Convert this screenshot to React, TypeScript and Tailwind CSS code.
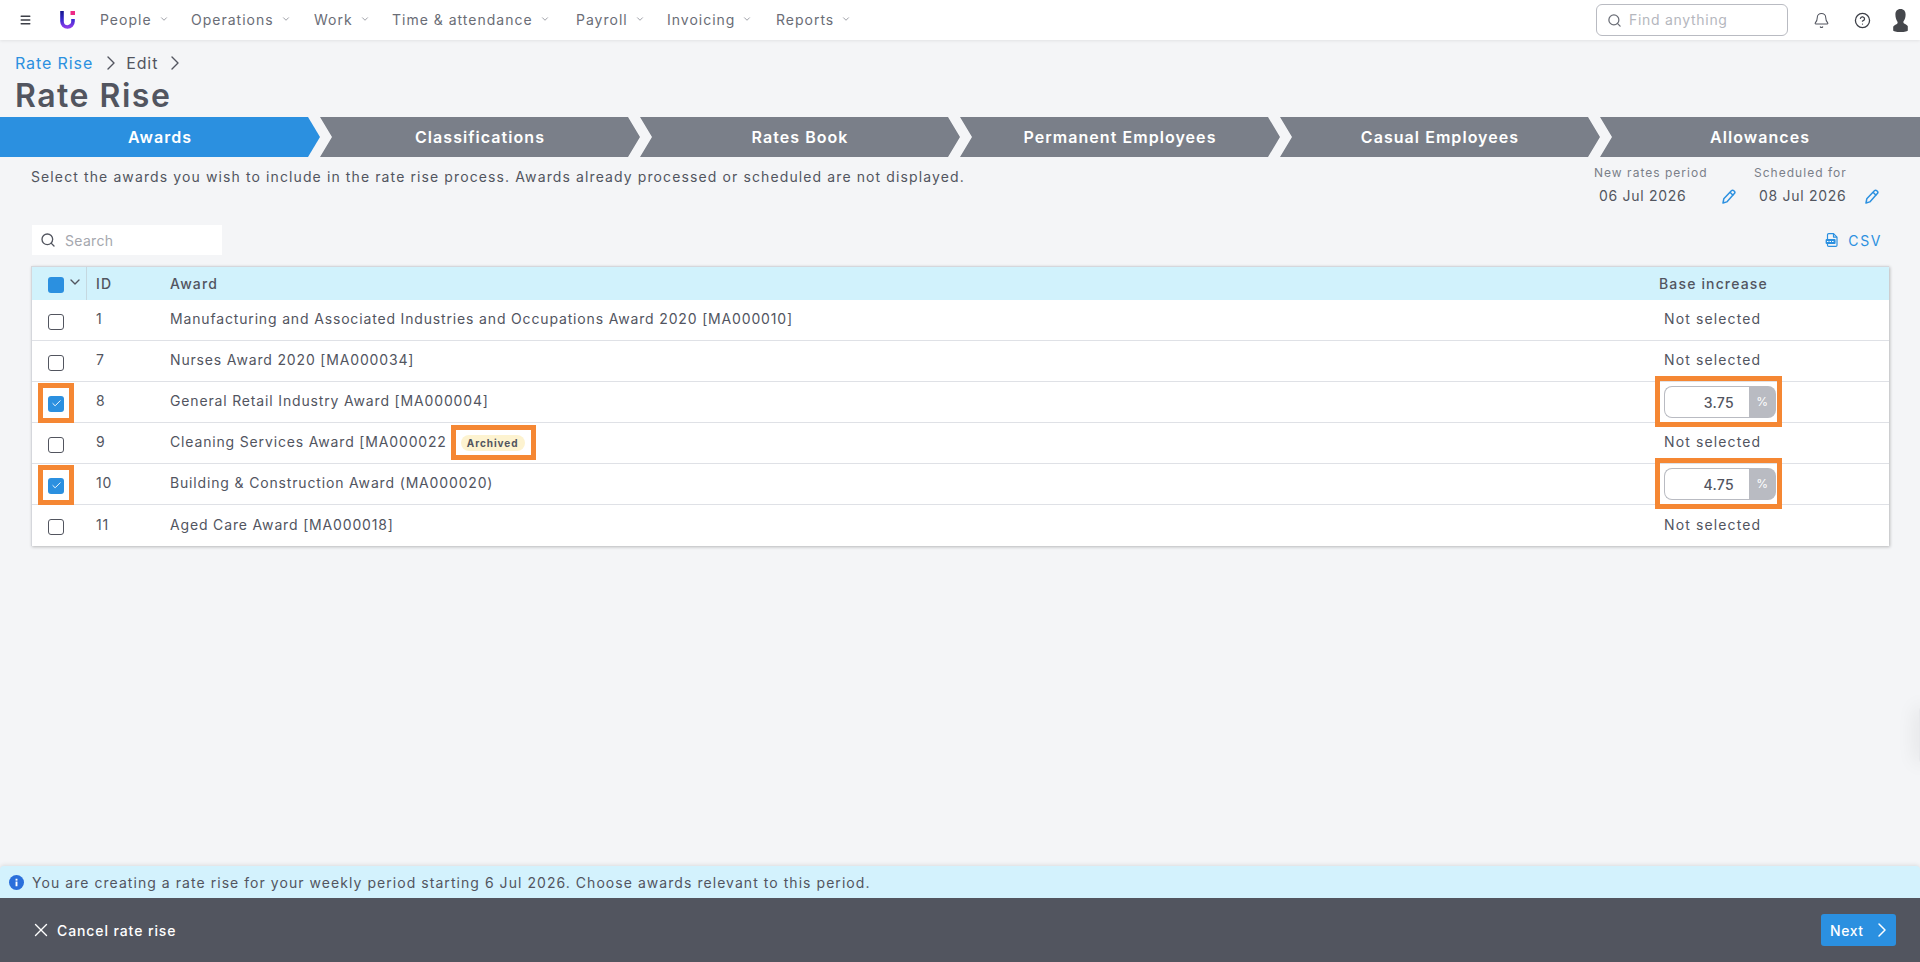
import React from "react";
import { Search, ChevronDown, ChevronRight, Menu, Bell, CircleHelp, X, Check } from "lucide-react";

const font = { fontFamily: "Inter, 'Liberation Sans', sans-serif" };

const navItems = [
  ["People", "w-[91px]"],
  ["Operations", "w-[123px]"],
  ["Work", "w-[78px]"],
  ["Time & attendance", "w-[184px]"],
  ["Payroll", "w-[91px]"],
  ["Invoicing", "w-[109px]"],
  ["Reports", "w-[90px]"],
];

const steps = ["Awards", "Classifications", "Rates Book", "Permanent Employees", "Casual Employees", "Allowances"];

const rows = [
  { id: "1", name: "Manufacturing and Associated Industries and Occupations Award 2020 [MA000010]" },
  { id: "7", name: "Nurses Award 2020 [MA000034]" },
  { id: "8", name: "General Retail Industry Award [MA000004]", value: "3.75" },
  { id: "9", name: "Cleaning Services Award [MA000022", archived: true },
  { id: "10", name: "Building & Construction Award (MA000020)", value: "4.75" },
  { id: "11", name: "Aged Care Award [MA000018]" },
];

function Logo() {
  return (
    <svg width="15" height="18" viewBox="0 0 15 18" className="shrink-0">
      <defs>
        <linearGradient id="lg" x1="0" y1="0" x2="0" y2="1">
          <stop offset="0" stopColor="#14148c" />
          <stop offset="0.55" stopColor="#3a2bd0" />
          <stop offset="1" stopColor="#8a3be8" />
        </linearGradient>
      </defs>
      <path d="M2 0v10.500a5.500 5.500 0 0 0 11 0V8" fill="none" stroke="url(#lg)" strokeWidth="3.600" />
      <rect x="10.500" y="0" width="4.500" height="4" fill="#ee2a86" />
    </svg>
  );
}

function UserIcon() {
  return (
    <svg width="15" height="23" viewBox="0 0 15 23" fill="#45474c">
      <path d="M7.500 0C11 0 12.600 2.400 12.600 5.600c0 2.600-.7 5-1.900 6.500-.5.700-.5 1.800.3 2.300 1.500.9 3.400 1.400 3.800 2.800V21.500c0 .8-3 1.500-7.300 1.500S.2 22.300.2 21.500v-3.800c.4-1.400 2.300-1.900 3.800-2.800.8-.5.800-1.600.3-2.300C3.100 10.600 2.400 8.200 2.400 5.600 2.400 2.400 4 0 7.500 0z" />
    </svg>
  );
}

function PencilIcon() {
  return (
    <svg width="14" height="15" viewBox="0 0 14 15" fill="none" stroke="#2b90e0" strokeWidth="1.500" strokeLinejoin="round">
      <path d="M1 14l.8-4.200L9.400 1.700c.7-.7 1.700-.7 2.400 0l.5.500c.7.700.7 1.700 0 2.400L4.800 12.900 1 14z" />
      <path d="M8 3.200l3.300 3.300" />
    </svg>
  );
}

function CsvIcon() {
  return (
    <svg width="14" height="14" viewBox="0 0 14 14" fill="none" stroke="#2b90e0" strokeWidth="1.200" strokeLinejoin="round">
      <path d="M2.500 6V1.800c0-.7.500-1.200 1.200-1.200H8.500l3.500 3.500v8.100c0 .7-.5 1.200-1.200 1.200H3.700c-.7 0-1.200-.5-1.200-1.200V11" />
      <path d="M8.500.6v3.500H12" />
      <rect x="0.600" y="6" width="10" height="5" rx="1" fill="#2b90e0" stroke="none" />
      <path d="M2 8.500h7" stroke="#fff" strokeWidth="1" strokeDasharray="1.500 1" />
    </svg>
  );
}

function CheckBox({ checked, mark }: { checked?: boolean; mark?: boolean }) {
  return (
    <span
      className={
        checked
          ? "relative flex h-4 w-4 mt-[3px] items-center justify-center rounded-[3px] bg-[#2b90e0]"
          : "relative flex h-4 w-4 mt-[3px] rounded-[3px] border border-[#52555f] bg-white"
      }
    >
      {checked && <Check size={11} color="#fff" strokeWidth={2} />}
      {mark && <span className="absolute -left-[10px] -right-[10px] -top-[13px] -bottom-[11px] border-[5px] border-[#f58733]" />}
    </span>
  );
}

function Row({ id, name, value, archived }: { id: string; name: string; value?: string; archived?: boolean }) {
  return (
    <div className="flex h-[41px] items-center border-b border-[#dfe1e6] bg-white text-[14px] tracking-[0.84px] text-[#52555f] last:border-b-0">
      <div className="flex w-[55px] shrink-0 justify-start pl-[16px]">
        <CheckBox checked={!!value} mark={!!value} />
      </div>
      <div className="-mt-[3px] w-[83px] shrink-0 pl-[9px]">{id}</div>
      <div className="flex min-w-0 flex-1 items-center">
        <span className="-mt-[3px]">{name}</span>
        {archived && (
          <span className="relative ml-[14px] rounded-full bg-[#fdf3d0] px-[6px] py-[2px] text-[10px] leading-[12px] font-bold tracking-[0.95px] text-[#52555f]">
            Archived
            <span className="absolute -left-[10px] -right-[11px] -top-[10px] -bottom-[9px] border-[5px] border-[#f58733]" />
          </span>
        )}
      </div>
      <div className="w-[225px] shrink-0">
        {value ? (
          <div className="relative flex h-8 w-[112px] overflow-visible">
            <div className="flex flex-1 items-center justify-end rounded-l-[8px] border border-r-0 border-[#b9bbc2] bg-white pr-[15px] font-medium tracking-[0.3px]">{value}</div>
            <div className="flex w-[27px] items-center justify-center rounded-r-[8px] bg-[#b9bbc2] text-[12px] text-white">%</div>
            <span className="absolute -left-[9px] -right-[6px] -top-[10px] -bottom-[9px] border-[5px] border-[#f58733]" />
          </div>
        ) : (
          <span className="-mt-[3px] block tracking-[1.13px]">Not selected</span>
        )}
      </div>
    </div>
  );
}

export default function App() {
  return (
    <div style={font} className="relative flex h-[962px] w-[1920px] flex-col overflow-hidden bg-[#f4f5f7] text-[#52555f]">
      <header className="flex h-10 shrink-0 items-center bg-white pl-[19px] pr-[12px] shadow-[0_1px_3px_rgba(0,0,0,0.08)]">
        <Menu size={14} color="#3c3f47" strokeWidth={2.5} className="w-[13px]" />
        <div className="ml-[28px] mr-[25px] flex w-[15px] justify-center"><Logo /></div>
        <nav className="-mt-[2px] flex items-center">
          {navItems.map(([label, w]) => (
            <div key={label} className={"flex items-center gap-[7px] text-[14px] tracking-[1px] text-[#6a6d76] " + w}>
              <span>{label}</span>
              <ChevronDown size={10} color="#8a8d95" />
            </div>
          ))}
        </nav>
        <div className="ml-auto flex items-center">
          <div className="flex h-[32px] w-[192px] items-center rounded-[6px] border border-[#b9bbc2] bg-white pl-[10px]">
            <Search size={15} color="#6a6d76" />
            <span className="ml-[7px] -mt-[2px] text-[14px] tracking-[0.7px] text-[#b5b7be]">Find anything</span>
          </div>
          <Bell size={17} color="#52555f" strokeWidth={1.5} className="ml-[25px]" />
          <CircleHelp size={17} color="#3c3f47" strokeWidth={1.8} className="ml-[24px]" />
          <div className="ml-[22px]"><UserIcon /></div>
        </div>
      </header>

      <div className="mt-[15px] flex h-4 items-center pl-[15px] text-[16px] leading-[16px] tracking-[0.9px]">
        <span className="text-[#2b90e0]">Rate Rise</span>
        <ChevronRight size={24} color="#52555f" strokeWidth={1.4} className="ml-[6px] mr-[3px]" />
        <span>Edit</span>
        <ChevronRight size={24} color="#52555f" strokeWidth={1.4} className="ml-[5px]" />
      </div>
      <h1 className="mt-[6px] pl-[15px] text-[32px] leading-[38px] font-semibold tracking-[1.5px] text-[#52555f]">Rate Rise</h1>

      <div className="mt-[2px] flex h-10 shrink-0">
        {steps.map((s, i) => (
          <div
            key={s}
            className={
              (i === 0
                ? "bg-[#2b90e0] [clip-path:polygon(0_0,308px_0,320px_50%,308px_100%,0_100%)] "
                : i === 5
                ? "bg-[#7a7f89] [clip-path:polygon(0_0,100%_0,100%_100%,0_100%,12px_50%)] "
                : "bg-[#7a7f89] [clip-path:polygon(0_0,308px_0,320px_50%,308px_100%,0_100%,12px_50%)] ") +
              "flex w-[320px] items-center justify-center text-[16px] font-semibold tracking-[1.05px] text-white"
            }
          >
            {s}
          </div>
        ))}
      </div>

      <div className="flex items-start justify-between pl-[31px] pr-[41px]">
        <p className="mt-[11px] text-[14px] leading-[18px] tracking-[1.11px]">
          Select the awards you wish to include in the rate rise process. Awards already processed or scheduled are not displayed.
        </p>
        <div className="mt-[9px] flex">
          <div className="w-[160px]">
            <div className="text-[12px] leading-[14px] tracking-[1.02px] text-[#7a7f89]">New rates period</div>
            <div className="mt-[7px] flex items-center pl-[5px] text-[14px] leading-[18px] tracking-[0.7px]">
              <span className="w-[123px]">06 Jul 2026</span>
              <PencilIcon />
            </div>
          </div>
          <div className="w-[125px]">
            <div className="text-[12px] leading-[14px] tracking-[1.02px] text-[#7a7f89]">Scheduled for</div>
            <div className="mt-[7px] flex items-center pl-[5px] text-[14px] leading-[18px] tracking-[0.7px]">
              <span className="w-[106px]">08 Jul 2026</span>
              <PencilIcon />
            </div>
          </div>
        </div>
      </div>

      <div className="mt-[20px] flex items-center justify-between pl-[32px] pr-[38px]">
        <div className="flex h-[30px] w-[190px] items-center bg-white pl-[8px]">
          <Search size={16} color="#52555f" />
          <span className="ml-[9px] text-[14px] tracking-[0.3px] text-[#a5a7ae]">Search</span>
        </div>
        <div className="flex items-center gap-[9px] text-[14px] tracking-[1.6px] text-[#2b90e0]">
          <CsvIcon />
          CSV
        </div>
      </div>

      <div className="mx-[31px] mt-[11px] w-[1858px] border-t border-l border-[#d5d7dc] shadow-[1px_1px_3px_rgba(0,0,0,0.25)]">
        <div className="flex h-[33px] items-center bg-[#d1f2fc] text-[14px] font-medium tracking-[1.15px] text-[#52555f]">
          <div className="relative flex h-full w-[55px] shrink-0 items-center border-r border-[#c5d8e0] pl-[16px]">
            <span className="mt-[3px] h-4 w-4 rounded-[3px] bg-[#2b90e0]" />
            <ChevronDown size={16} color="#52555f" className="ml-[3px] -mt-[3px]" />
          </div>
          <div className="w-[83px] shrink-0 pl-[9px]">ID</div>
          <div className="flex-1">Award</div>
          <div className="w-[230px] shrink-0">Base increase</div>
        </div>
        {rows.map((r) => (
          <Row key={r.id} {...r} />
        ))}
      </div>

      <div className="mt-auto flex h-[32px] shrink-0 items-center rounded-t-[4px] bg-[#d3f2fd] pl-[9px] text-[14px] tracking-[1.05px] shadow-[0_-1px_4px_rgba(0,0,0,0.1)]">
        <svg width="15" height="15" viewBox="0 0 16 16">
          <circle cx="8" cy="8" r="8" fill="#2a6fdb" />
          <rect x="7" y="7" width="2" height="5" fill="#fff" />
          <rect x="7" y="4" width="2" height="2" fill="#fff" />
        </svg>
        <span className="ml-[8px]">You are creating a rate rise for your weekly period starting 6 Jul 2026. Choose awards relevant to this period.</span>
      </div>
      <footer className="flex h-16 shrink-0 items-center justify-between bg-[#52555f] pl-[30px] pr-[24px] text-white">
        <div className="flex items-center gap-[5px] text-[14px] font-medium tracking-[0.9px]">
          <X size={22} color="#fff" strokeWidth={1.5} />
          Cancel rate rise
        </div>
        <div className="flex h-8 w-[75px] items-center gap-[6px] rounded-[3px] bg-[#2b90e0] pl-[9px] text-[14px] font-medium tracking-[0.6px]">
          Next
          <ChevronRight size={24} color="#fff" strokeWidth={1.5} />
        </div>
      </footer>
      <div className="absolute right-[-4px] top-[707px] h-[56px] w-[5px] rounded-l-[4px] bg-[#e8e9ec] shadow-[0_0_20px_rgba(0,0,0,0.2)]" />
    </div>
  );
}
